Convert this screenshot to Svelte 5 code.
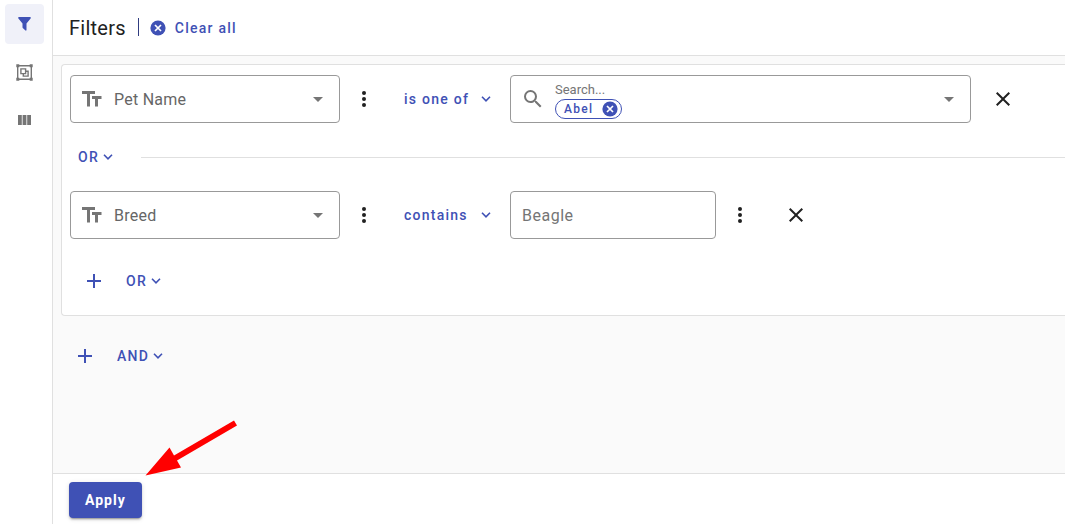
<script lang="ts">
	type Tool = 'filter' | 'group' | 'columns';

	let tool: Tool = $state('filter');
	let names = $state(['Abel']);
	let search = $state('');

	const tools: { id: Tool; label: string }[] = [
		{ id: 'filter', label: 'Filters' },
		{ id: 'group', label: 'Group' },
		{ id: 'columns', label: 'Columns' }
	];
	const fields = ['Pet Name', 'Breed'];
	const operators = ['is one of', 'contains'];
	const joins = ['OR', 'AND'];

	function clearAll() {
		names = [];
		search = '';
	}
</script>

{#snippet chevron()}
	<svg class="chevron" width="10" height="6" viewBox="0 0 10 6" aria-hidden="true">
		<path d="M1 .8l4 4 4-4" fill="none" stroke="currentColor" stroke-width="1.6" />
	</svg>
{/snippet}

{#snippet caret()}
	<svg class="caret" width="10" height="5" viewBox="0 0 10 5" aria-hidden="true">
		<path d="M0 0h10L5 5z" fill="currentColor" />
	</svg>
{/snippet}

{#snippet cancel()}
	<svg width="16" height="16" viewBox="0 0 16 16" aria-hidden="true">
		<circle cx="8" cy="8" r="7.6" fill="currentColor" />
		<path d="M5 5l6 6M11 5l-6 6" stroke="#fff" stroke-width="1.7" />
	</svg>
{/snippet}

{#snippet more(label: string)}
	<button class="icon-button" aria-label={label}>
		<svg width="24" height="24" viewBox="0 0 24 24" fill="currentColor" aria-hidden="true">
			<circle cx="12" cy="6" r="2" />
			<circle cx="12" cy="12" r="2" />
			<circle cx="12" cy="18" r="2" />
		</svg>
	</button>
{/snippet}

{#snippet remove()}
	<button class="icon-button remove" aria-label="Remove filter">
		<svg width="24" height="24" viewBox="0 0 24 24" fill="currentColor" aria-hidden="true">
			<path
				d="M19 6.41L17.59 5 12 10.59 6.41 5 5 6.41 10.59 12 5 17.59 6.41 19 12 13.41 17.59 19 19 17.59 13.41 12z"
			/>
		</svg>
	</button>
{/snippet}

{#snippet add(label: string)}
	<button class="icon-button add" aria-label={label}>
		<svg width="24" height="24" viewBox="0 0 24 24" fill="currentColor" aria-hidden="true">
			<path d="M19 13h-6v6h-2v-6H5v-2h6V5h2v6h6z" />
		</svg>
	</button>
{/snippet}

{#snippet field(value: string)}
	<label class="field">
		<svg class="type" width="20" height="16" viewBox="0 0 20 16" fill="currentColor" aria-hidden="true">
			<path d="M0 0h13v3H8v12.500H5V3H0zM10 5h9.500v3H16v7.500h-3V8h-3z" />
		</svg>
		<select aria-label="Field" {value}>
			{#each fields as name}
				<option>{name}</option>
			{/each}
		</select>
		{@render caret()}
	</label>
{/snippet}

{#snippet operator(value: string)}
	<label class="menu operator">
		<select aria-label="Operator" {value}>
			{#each operators as name}
				<option>{name}</option>
			{/each}
		</select>
		{@render chevron()}
	</label>
{/snippet}

{#snippet join(value: string)}
	<label class="menu join">
		<select aria-label="Combine with" {value}>
			{#each joins as name}
				<option>{name}</option>
			{/each}
		</select>
		{@render chevron()}
	</label>
{/snippet}

<div class="shell">
	<nav class="rail" aria-label="Tools">
		{#each tools as { id, label }}
			<button class={['tool', tool === id && 'active']} aria-label={label} onclick={() => (tool = id)}>
				{#if id === 'filter'}
					<svg width="13" height="14" viewBox="0 0 13 14" fill="currentColor" aria-hidden="true">
						<path d="M.7 0h11.600q.9.600.3 1.400L8.500 6.500V13q-.2 1-1 .6L5 11.200Q4.500 10.800 4.500 10.300V6.500L.4 1.400Q-.2.600.7 0z" />
					</svg>
				{:else if id === 'group'}
					<svg width="17" height="17" viewBox="0 0 17 17" aria-hidden="true">
						<path
							d="M1.700 1.700h13.600v13.600H1.700zM4.900 4.900h4.700v4.700H4.900zM9.600 7.300h2.500v4.800H7.300V9.600"
							fill="none"
							stroke="currentColor"
							stroke-width="1.400"
						/>
						<path d="M.3.300h3v3h-3zM13.700.300h3v3h-3zM.3 13.700h3v3h-3zM13.700 13.700h3v3h-3z" fill="currentColor" />
					</svg>
				{:else}
					<svg width="13" height="10" viewBox="0 0 13 10" fill="currentColor" aria-hidden="true">
						<path d="M0 0h3.800v10H0zM4.600 0h3.800v10H4.600zM9.200 0H13v10H9.200z" />
					</svg>
				{/if}
			</button>
		{/each}
	</nav>

	<main>
		<header>
			<h1>Filters</h1>
			<button class="clear" onclick={clearAll}>
				{@render cancel()}
				Clear all
			</button>
		</header>

		<div class="content">
			<section class="card">
				<div class="row">
					{@render field('Pet Name')}
					{@render more('Field options')}
					{@render operator('is one of')}
					<div class="search">
						<svg class="glass" width="24" height="24" viewBox="0 0 24 24" fill="currentColor" aria-hidden="true">
							<path
								d="M15.500 14h-.79l-.28-.27A6.471 6.471 0 0 0 16 9.500 6.500 6.500 0 1 0 9.500 16c1.610 0 3.090-.59 4.230-1.570l.27.28v.79l5 4.990L20.490 19l-4.990-5zm-6 0C7.010 14 5 11.990 5 9.500S7.010 5 9.500 5 14 7.010 14 9.500 11.990 14 9.500 14z"
							/>
						</svg>
						<div class="values">
							<input aria-label="Search names" placeholder="Search..." bind:value={search} />
							{#each names as name}
								<span class="chip">
									{name}
									<button
										aria-label="Remove {name}"
										onclick={() => (names = names.filter((n) => n !== name))}
									>
										{@render cancel()}
									</button>
								</span>
							{/each}
						</div>
						<button class="open" aria-label="Show names">{@render caret()}</button>
					</div>
					{@render remove()}
				</div>

				<div class="between">
					{@render join('OR')}
					<hr />
				</div>

				<div class="row">
					{@render field('Breed')}
					{@render more('Field options')}
					{@render operator('contains')}
					<input class="text" aria-label="Value" placeholder="Beagle" />
					{@render more('Value options')}
					{@render remove()}
				</div>

				<div class="row more-filters">
					{@render add('Add filter')}
					{@render join('OR')}
				</div>
			</section>

			<div class="row more-groups">
				{@render add('Add filter group')}
				{@render join('AND')}
			</div>
		</div>

		<footer>
			<button class="apply">Apply</button>
			<svg class="pointer" width="94" height="56" viewBox="0 0 94 56" aria-hidden="true">
				<path d="M.5 55.500l24-28 4.500 8L89 .5l3 5-60 35 4 7z" fill="#f00" />
			</svg>
		</footer>
	</main>
</div>

<style>
	:global(body) {
		margin: 0;
	}

	.shell {
		--primary: #3f51b5;
		--line: #e0e0e0;
		--grey: #757575;
		display: flex;
		min-height: 100vh;
		overflow: hidden;
		background: #fff;
		color: #212121;
		font-family: Roboto, 'Liberation Sans', sans-serif;
		font-size: 16px;
	}

	.shell *,
	.shell {
		box-sizing: border-box;
	}

	svg {
		display: block;
		flex: none;
	}

	button,
	input,
	select {
		margin: 0;
		padding: 0;
		border: 0;
		outline: 0;
		background: none;
		color: inherit;
		font: inherit;
		letter-spacing: inherit;
	}

	button,
	select {
		cursor: pointer;
	}

	select {
		appearance: none;
		field-sizing: content;
	}

	.rail {
		display: flex;
		flex: none;
		flex-direction: column;
		gap: 8px;
		width: 53px;
		padding: 4px 8px 4px 5px;
		border-right: 1px solid var(--line);
	}

	.tool {
		display: grid;
		place-content: center;
		height: 40px;
		border-radius: 4px;
		color: var(--grey);
	}

	.tool.active {
		background: #f0f1f9;
		color: var(--primary);
	}

	main {
		display: flex;
		flex: 1;
		flex-direction: column;
		min-width: 0;
	}

	header {
		display: flex;
		align-items: center;
		height: 56px;
		padding: 0 16px;
		border-bottom: 1px solid var(--line);
	}

	h1 {
		margin: 0;
		font-size: 20px;
		font-weight: 400;
		letter-spacing: 0.25px;
	}

	.clear {
		display: flex;
		align-items: center;
		gap: 9px;
		color: var(--primary);
		font-size: 14px;
		font-weight: 500;
		letter-spacing: 1.25px;
	}

	.clear::before {
		width: 1px;
		height: 18px;
		margin: 0 2px 2px 12px;
		background: #303c80;
		content: '';
	}

	.content {
		flex: 1;
		padding: 8px 0 8px 8px;
		background: #fafafa;
	}

	.card {
		padding: 10px 0 10px 8px;
		border: 1px solid var(--line);
		border-right: 0;
		border-radius: 4px 0 0 4px;
		background: #fff;
	}

	.row,
	.between {
		display: flex;
		align-items: center;
	}

	.between {
		gap: 20px;
		height: 68px;
	}

	.more-filters {
		margin-top: 18px;
	}

	.more-groups {
		margin-top: 16px;
	}

	hr {
		flex: 1;
		margin: 0;
		border: 0;
		border-top: 1px solid var(--line);
	}

	.field,
	.search,
	.text {
		height: 48px;
		border: 1px solid #999;
		border-radius: 4px;
		background: #fff;
	}

	.field {
		display: grid;
		grid-template-columns: 11px 20px 1fr 10px 16px;
		align-items: center;
		width: 270px;
		color: var(--grey);
	}

	.field .type {
		grid-area: 1 / 2;
		pointer-events: none;
	}

	.field select {
		grid-area: 1 / 1 / 2 / -1;
		height: 46px;
		padding: 0 43px;
		color: #666;
		letter-spacing: 0.25px;
	}

	.field .caret {
		grid-area: 1 / 4;
		pointer-events: none;
	}

	.icon-button {
		display: grid;
		flex: none;
		place-content: center;
		width: 48px;
		height: 48px;
		border-radius: 50%;
	}

	.remove {
		margin-left: 8px;
	}

	.add {
		color: var(--primary);
	}

	.menu {
		display: grid;
		align-items: center;
		color: var(--primary);
		font-size: 14px;
		font-weight: 500;
	}

	.menu select {
		grid-area: 1 / 1;
		height: 36px;
	}

	.menu .chevron {
		grid-area: 1 / 1;
		justify-self: end;
		pointer-events: none;
	}

	.operator {
		width: 122px;
		letter-spacing: 1.25px;
	}

	.operator select {
		padding: 0 36px 0 16px;
	}

	.operator .chevron {
		margin-right: 19px;
	}

	.join {
		letter-spacing: 1.25px;
	}

	.join select {
		padding: 0 22px 0 8px;
	}

	.join .chevron {
		margin-right: 8px;
	}

	.search {
		display: flex;
		align-items: center;
		width: 461px;
		color: var(--grey);
	}

	.glass {
		margin: 0 10px;
	}

	.values {
		display: flex;
		flex: 1;
		flex-direction: column;
		align-items: flex-start;
		gap: 2px;
		min-width: 0;
		padding-top: 2px;
	}

	.values input {
		width: 100%;
		height: 16px;
		font-size: 13px;
	}

	.chip {
		display: flex;
		align-items: center;
		gap: 9px;
		height: 20px;
		padding: 0 3px 0 8px;
		border: 1px solid var(--primary);
		border-radius: 10px;
		color: var(--primary);
		font-size: 12px;
		font-weight: 500;
		letter-spacing: 1.25px;
	}

	.open {
		display: grid;
		place-content: center;
		width: 42px;
		height: 46px;
	}

	.text {
		width: 206px;
		padding: 0 11px;
		letter-spacing: 0.5px;
	}

	input::placeholder {
		color: var(--grey);
		opacity: 1;
	}

	footer {
		position: relative;
		padding: 8px 16px 6px;
		border-top: 1px solid var(--line);
	}

	.apply {
		display: block;
		height: 36px;
		padding: 0 16px;
		border-radius: 4px;
		background: var(--primary);
		box-shadow:
			0 3px 1px -2px rgba(0, 0, 0, 0.2),
			0 2px 2px rgba(0, 0, 0, 0.14),
			0 1px 5px rgba(0, 0, 0, 0.12);
		color: #fff;
		font-size: 14px;
		font-weight: 700;
		letter-spacing: 1px;
	}

	.pointer {
		position: absolute;
		bottom: 48px;
		left: 92px;
		pointer-events: none;
	}
</style>
